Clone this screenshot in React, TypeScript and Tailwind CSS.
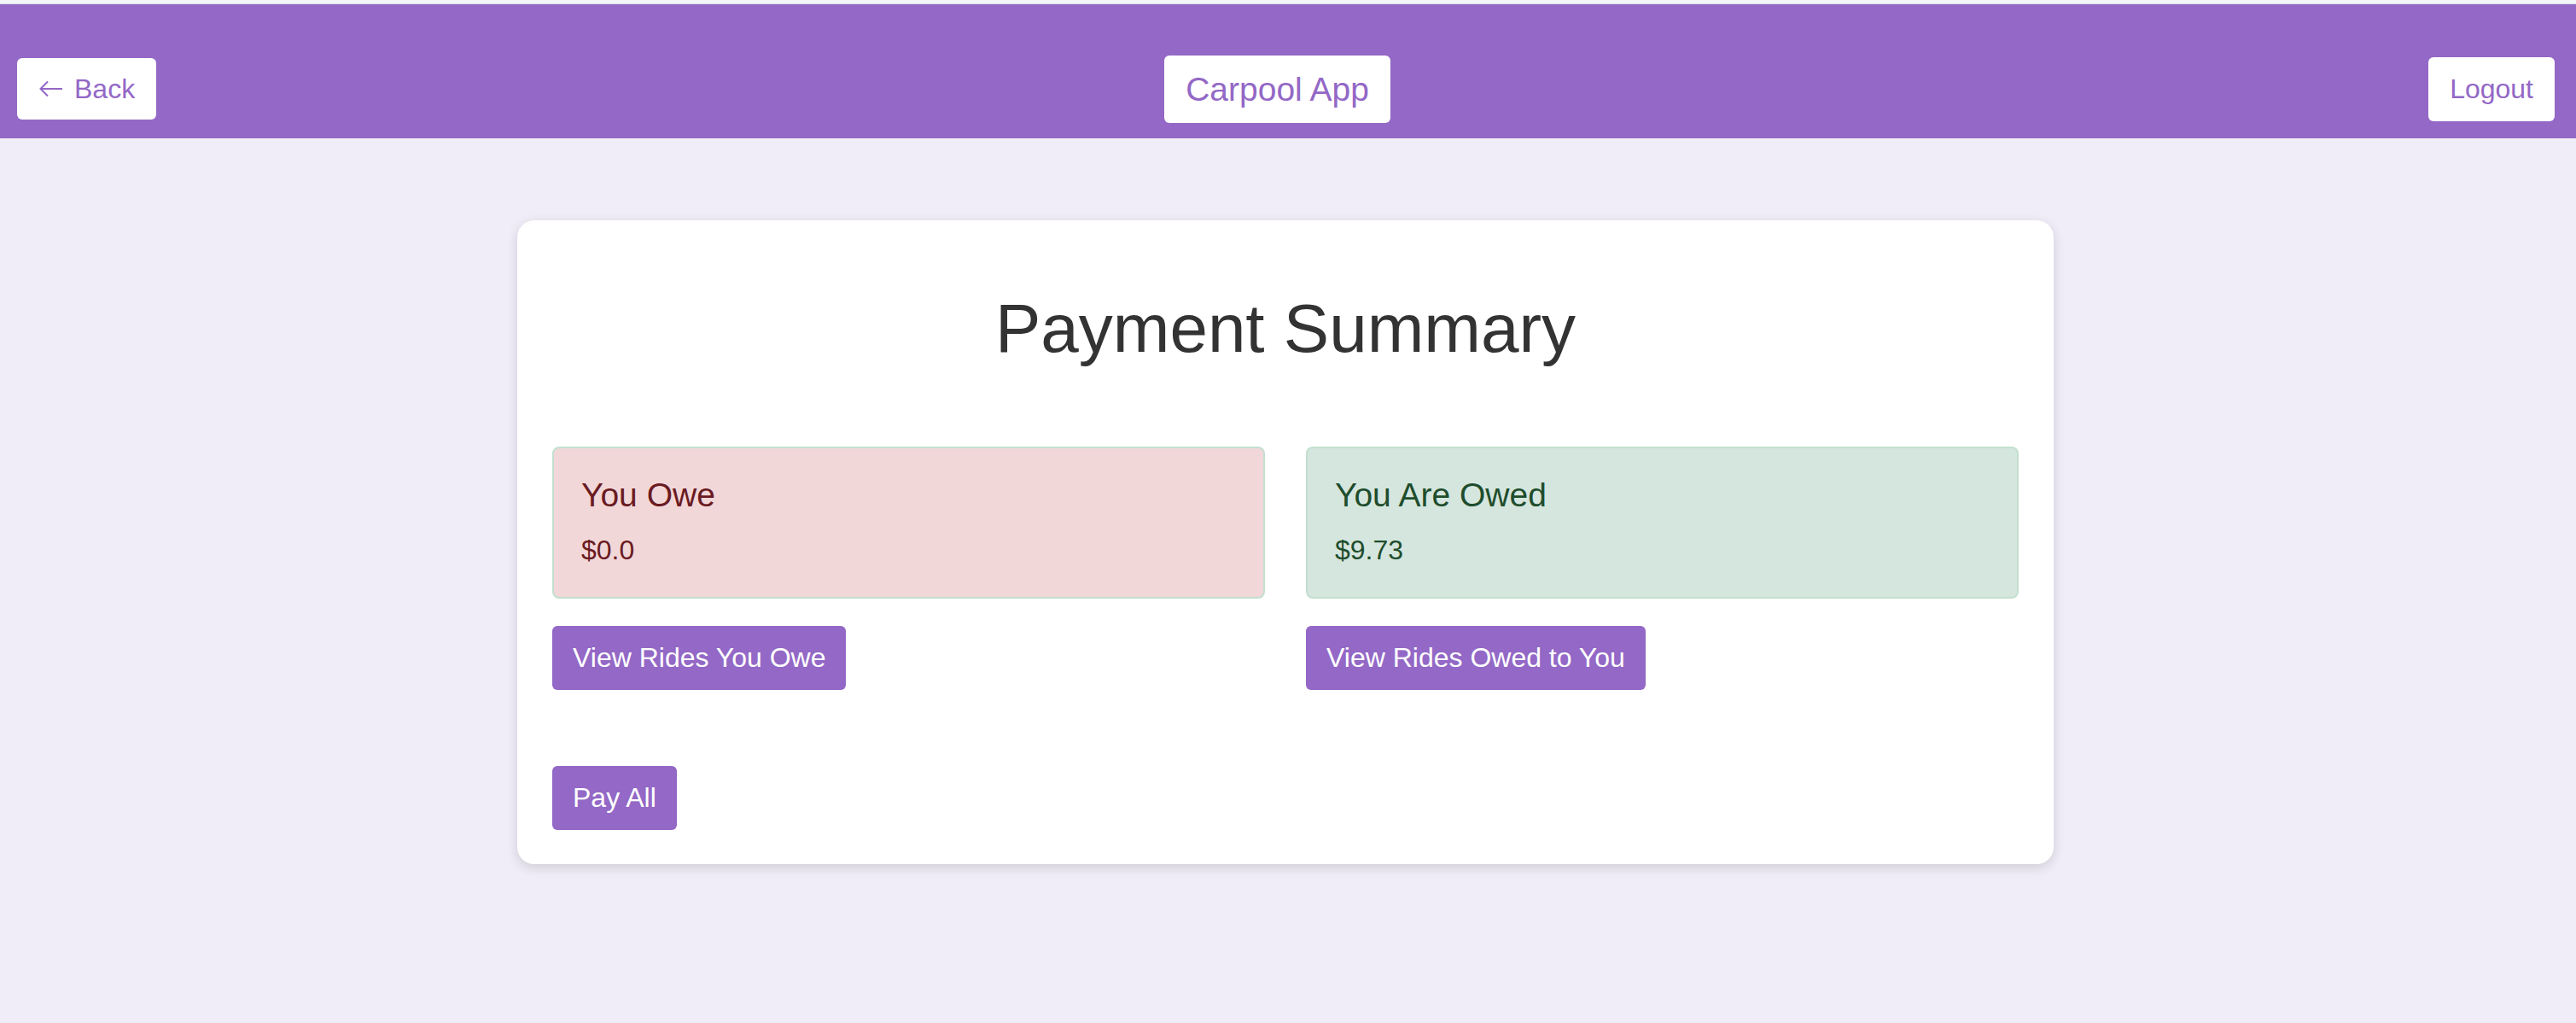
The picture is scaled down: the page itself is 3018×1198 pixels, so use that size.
import React from 'react'

const font = { fontFamily: '"Liberation Sans", Arial, Helvetica, sans-serif' }

function HeaderButton({ children, className = '' }: { children: React.ReactNode; className?: string }) {
  return (
    <button className={`rounded-[6px] bg-white text-[#9368c6] ${className}`}>{children}</button>
  )
}

function BalanceBox({ title, amount, tone }: { title: string; amount: string; tone: 'owe' | 'owed' }) {
  const colors = tone === 'owe' ? 'bg-[#f2d7d9] text-[#6a1b21]' : 'bg-[#d5e6de] text-[#1e4d2c]'
  return (
    <div className={`rounded-[8px] border-2 border-[#c3dfcf] pb-[36px] pl-[32px] pt-[32px] ${colors}`}>
      <h3 className="text-[39px] leading-[45px]">{title}</h3>
      <p className="mt-[24px] text-[32px] leading-[37px]">{amount}</p>
    </div>
  )
}

function ActionButton({ children, className = '' }: { children: React.ReactNode; className?: string }) {
  return (
    <button className={`h-[75px] rounded-[6px] bg-[#9368c6] px-[24px] text-[32px] leading-[37px] text-white ${className}`}>
      {children}
    </button>
  )
}

export default function App() {
  return (
    <div className="min-h-screen bg-[#f0edf8]" style={font}>
      <div className="h-[5px] border-b border-[#d9dfe5] bg-[#f3f6f8]" />

      <header className="grid h-[157px] grid-cols-[1fr_auto_1fr] items-center bg-[#9368c6] pr-[25px] pt-[41px]">
        <div>
          <HeaderButton className="ml-[20px] inline-flex h-[72px] items-center gap-[13px] pl-[26px] pr-[25px] text-[32px] leading-[37px]">
            <svg width="28" height="20" viewBox="0 0 28 20" fill="none" stroke="currentColor" strokeWidth="2">
              <path d="M27 10H2" />
              <path d="M10 1.5L1.5 10L10 18.5" />
            </svg>
            <span>Back</span>
          </HeaderButton>
        </div>
        <HeaderButton className="h-[79px] px-[25px] text-[39px] leading-[45px]">Carpool App</HeaderButton>
        <div className="flex justify-end">
          <HeaderButton className="h-[75px] px-[25px] text-[32px] leading-[37px]">Logout</HeaderButton>
        </div>
      </header>

      <main className="flex justify-center pr-[6px] pt-[96px]">
        <section className="w-[1800px] rounded-[20px] bg-white px-[41px] pb-[40px] pt-[40px] shadow-[0_4px_14px_rgba(0,0,0,0.14)]">
          <h1 className="mt-[41px] text-center text-[80px] leading-[92px] text-[#333333]">Payment Summary</h1>

          <div className="mt-[92px] grid grid-cols-2 gap-[48px]">
            <div className="flex flex-col items-start gap-[32px]">
              <div className="w-full">
                <BalanceBox title="You Owe" amount="$0.0" tone="owe" />
              </div>
              <ActionButton>View Rides You Owe</ActionButton>
            </div>
            <div className="flex flex-col items-start gap-[32px]">
              <div className="w-full">
                <BalanceBox title="You Are Owed" amount="$9.73" tone="owed" />
              </div>
              <ActionButton>View Rides Owed to You</ActionButton>
            </div>
          </div>

          <ActionButton className="mt-[89px]">Pay All</ActionButton>
        </section>
      </main>
    </div>
  )
}
